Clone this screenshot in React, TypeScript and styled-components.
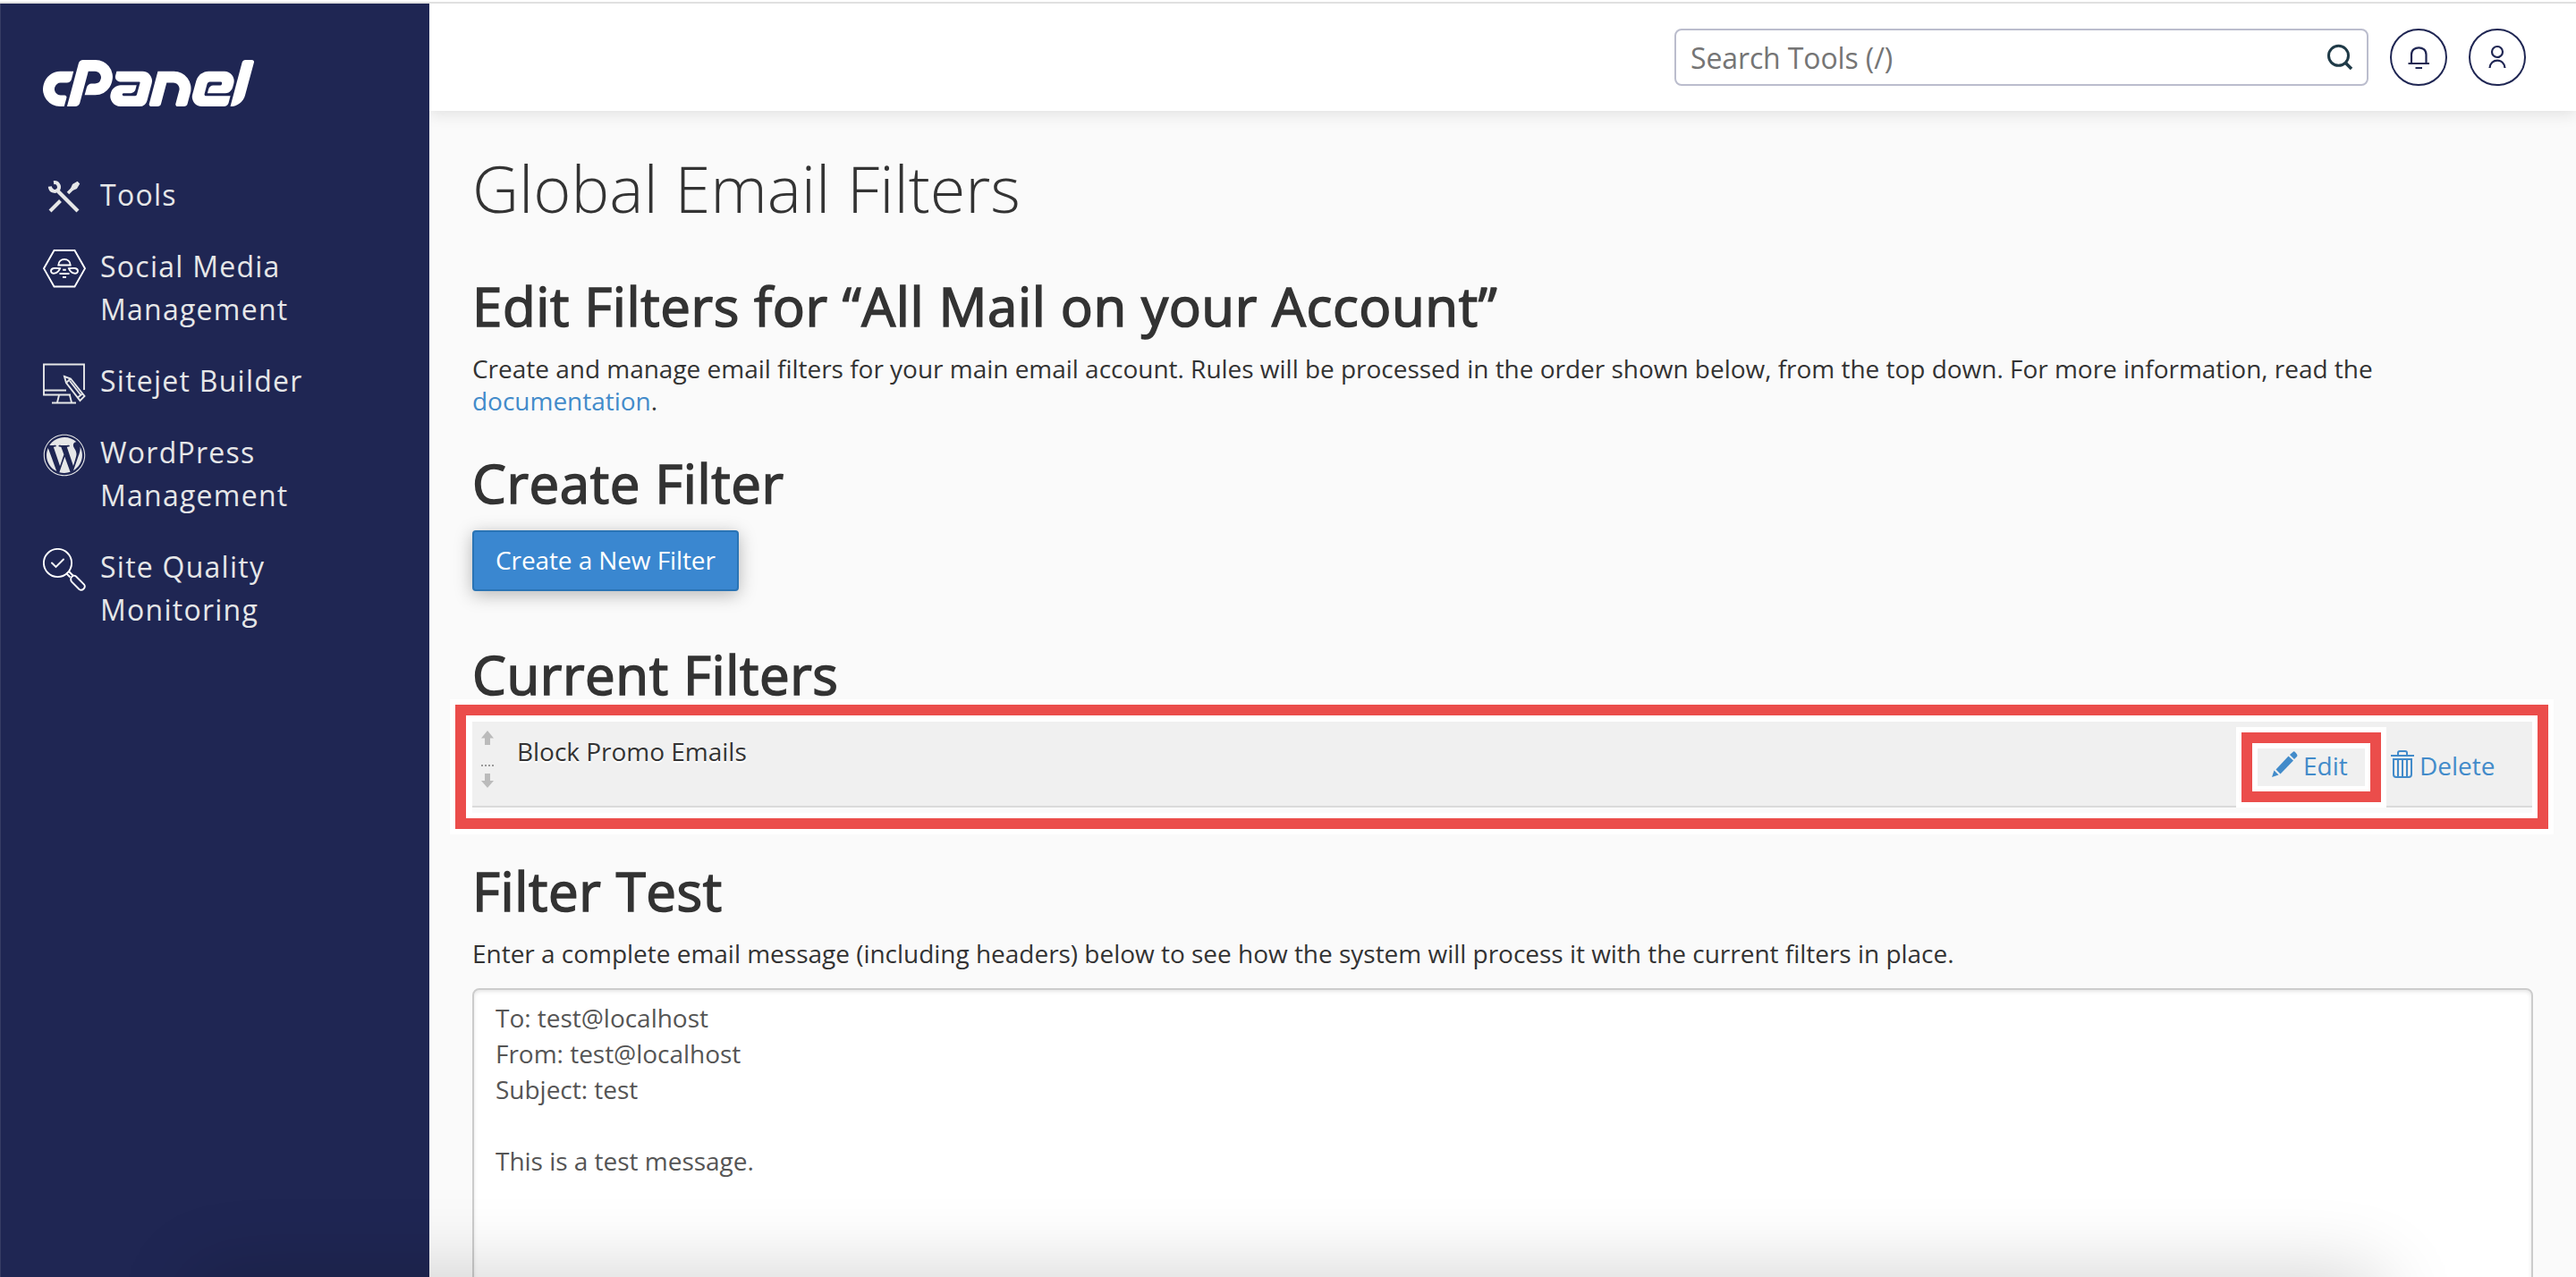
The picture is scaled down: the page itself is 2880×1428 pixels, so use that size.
import styled, { createGlobalStyle } from 'styled-components'
import { SiCpanel } from 'react-icons/si'
import { FaWordpress } from 'react-icons/fa'

const GlobalStyle = createGlobalStyle`
  * {
    box-sizing: border-box;
  }
  body {
    margin: 0;
    overflow: hidden;
    background: #fafafa;
    color: #333;
    font-family: 'Open Sans', sans-serif;
    font-size: 28px;
    line-height: 36px;
    letter-spacing: -0.02px;
  }
`
const Page = styled.div`
  height: 100vh;
  display: flex;
  flex-direction: column;
  overflow: hidden;
  border-top: 2px solid #fff;
`
const Body = styled.div`
  flex: 1;
  min-height: 0;
  display: flex;
  border-top: 2px solid #e0e0e0;
`
const Sidebar = styled.aside`
  width: 480px;
  flex: none;
  background: #1f2653;
  border-left: 1px solid #363c64;
  padding: 64px 0 0 47px;
`
const Logo = styled.div`
  height: 50px;
  display: flex;
  align-items: center;
  color: #fff;
  svg {
    width: 236px;
    height: 236px;
    flex: none;
  }
`
const Nav = styled.nav`
  display: flex;
  flex-direction: column;
  gap: 32px;
  margin-top: 76px;
`
const NavItem = styled.a`
  display: flex;
  align-items: flex-start;
  gap: 16px;
  color: #e6e7e8;
  font-size: 32px;
  line-height: 48px;
  letter-spacing: 1.25px;
  svg {
    flex: none;
    display: block;
    margin: 3px 0 -3px;
  }
`
const NavLabel = styled.span`
  width: 260px;
`
const Main = styled.main`
  flex: 1;
  min-width: 0;
  display: flex;
  flex-direction: column;
`
const Header = styled.header`
  height: 120px;
  flex: none;
  display: flex;
  justify-content: flex-end;
  align-items: flex-start;
  gap: 24px;
  padding: 28px 56px 0 0;
  background: #fff;
  box-shadow: 0 4px 16px rgba(0, 0, 0, 0.1);
  clip-path: inset(0 0 -40px 0);
`
const Search = styled.div`
  width: 776px;
  height: 64px;
  display: flex;
  align-items: center;
  justify-content: space-between;
  padding: 0 14px 0 16px;
  border: 2px solid #bbbdcd;
  border-radius: 8px;
`
const Placeholder = styled.span`
  padding-top: 2px;
  color: #757575;
  font-size: 32px;
  letter-spacing: -0.12px;
`
const RoundButton = styled.button`
  width: 64px;
  height: 64px;
  padding: 0;
  border: 2px solid #1f2653;
  border-radius: 50%;
  background: #fff;
  svg {
    display: block;
    width: 60px;
    height: 60px;
  }
`
const Content = styled.div`
  flex: 1;
  min-height: 0;
  padding: 38px 48px 0;
`
const PageTitle = styled.h1`
  margin: 0 0 48px;
  font-size: 72px;
  line-height: 96px;
  font-weight: 300;
`
const SectionTitle = styled.h2`
  margin: 0 0 16px;
  font-size: 60px;
  line-height: 72px;
  font-weight: 400;
  letter-spacing: 0.6px;
  -webkit-text-stroke: 1.6px #333;
`
const Copy = styled.p`
  margin: 0;
`
const Intro = styled(Copy)`
  margin-bottom: 38px;
`
const Link = styled.a`
  color: #428bca;
`
const CreateButton = styled.button`
  display: block;
  height: 68px;
  margin: 17px 0 57px;
  padding: 0 24px 2px;
  border: 2px solid #2a74b5;
  border-radius: 4px;
  background: #3a87d0;
  color: #fff;
  font: 28px/36px 'Open Sans', sans-serif;
  letter-spacing: -0.1px;
  box-shadow: 0 4px 20px rgba(0, 0, 0, 0.28);
`
const Highlight = styled.div`
  height: 151px;
  margin: -24px -23px 0 -25px;
  border: 6px solid #fff;
`
const RedFrame = styled.div`
  height: 139px;
  border: 12px solid #eb4d4b;
  background: #fff;
  padding: 7px 6px 6px 7px;
`
const FilterList = styled.div`
  height: 102px;
  background: #fafafa;
`
const FilterRow = styled.div`
  height: 96px;
  display: flex;
  align-items: flex-start;
  padding-left: 10px;
  background: #f0f0f0;
  border-bottom: 2px solid #dadada;
  text-shadow: 0 2px 0 #fff;
`
const FilterName = styled.span`
  flex: 1;
  padding: 15px 0 0 26px;
`
const EditFrame = styled.div`
  width: 168px;
  height: 90px;
  margin: 6px 0 -2px;
  border: 6px solid #fff;
  background: #fff;
`
const EditBox = styled.div`
  width: 156px;
  height: 78px;
  border: 12px solid #eb4d4b;
`
const EditInner = styled.div`
  height: 54px;
  border: 6px solid #fff;
  background: #f0f0f0;
  display: flex;
  padding: 0 0 4px 16px;
`
const Action = styled.a`
  display: flex;
  align-items: center;
  color: #428bca;
  text-shadow: none;
  svg {
    display: block;
    margin: -4px 6px 0 0;
  }
`
const DeleteSlot = styled.div`
  width: 163px;
  padding: 31px 0 0 5px;
`
const TestTitle = styled(SectionTitle)`
  margin-top: 27px;
`
const Message = styled.div`
  height: 460px;
  margin-top: 21px;
  padding: 11px 24px;
  border: 2px solid #ccc;
  border-radius: 8px;
  background: #fff;
  box-shadow: inset 0 2px 4px rgba(0, 0, 0, 0.1);
  color: #555;
  line-height: 40px;
  white-space: pre-wrap;
`
// soft shade rising from the bottom edge of the window
const BottomShade = styled.div`
  position: fixed;
  left: 220px;
  right: 220px;
  bottom: -80px;
  height: 80px;
  box-shadow: 0 0 90px rgba(0, 0, 0, 0.2);
  pointer-events: none;
`

const ToolsIcon = () => (
  <svg width="48" height="48" viewBox="0 0 48 48" fill="none" stroke="#e6e7e8">
    <path d="M17 17 39 39" strokeWidth="4.2" />
    <path d="M8 39 19.5 27.5" strokeWidth="4" />
    <path d="M28 19 33 14" strokeWidth="3.6" />
    <path d="M31.5 14 33.5 9.5 38.5 6.5 40.5 8.5 37.5 13.5 33 15.5Z" fill="#e6e7e8" strokeWidth="1.2" />
    <path d="M12 7.2C16.5 6.5 19.5 10.8 17.2 15C14.5 18.5 8.2 17 7.8 11.5" strokeWidth="4" />
  </svg>
)

const SocialIcon = () => (
  <svg width="48" height="48" viewBox="0 0 48 48" fill="none" stroke="#fff" strokeWidth="1.9">
    <path d="M12.5 3H35.5L47 23.2 35.5 43.5H12.5L1 23.2Z" />
    <path d="M17.3 19.5C17.3 10.8 30.7 10.8 30.7 19.5Z" />
    <path d="M19 23.3C14 22.5 9 22.5 9 26C9 30 16 30 19 23.3Z" />
    <path d="M29 23.3C34 22.5 39 22.5 39 26C39 30 32 30 29 23.3Z" />
    <path d="M22.2 24.8H25.8M18.5 29H29.5M22 33H26" />
  </svg>
)

const SitejetIcon = () => (
  <svg width="48" height="48" viewBox="0 0 48 48" fill="none" stroke="#e6e7e8" strokeWidth="1.9">
    <path d="M46 31V2.5H1V36.5H31M1 31.5H26" />
    <path d="M18 37 16 45M30 37 32 45M10 45.5H37" />
    <path d="M24 16 31 18.5 46.5 38 41.5 43 26 23Z" />
    <path d="M26.5 22.5 31 18.5M39 39.5 44 35.5M30 21 42.5 37" />
  </svg>
)

const QualityIcon = () => (
  <svg width="48" height="48" viewBox="0 0 48 48" fill="none" stroke="#fff" strokeWidth="1.9">
    <circle cx="16.5" cy="16.5" r="15.6" />
    <path d="M10 16.5 14.5 21 23 12.5" strokeLinecap="round" />
    <path d="M26 28 30.5 32.5M28.5 25.5 33.5 30.5" />
    <path d="M31.5 33C33 30.5 35 30 37 31.5L46 40.5C48.5 44 44 48.5 40.5 46L32 37.5C31 36 31 34.5 31.5 33Z" />
  </svg>
)

const SearchIcon = () => (
  <svg width="32" height="32" viewBox="0 0 32 32" fill="none" stroke="#1f3a47" strokeWidth="3">
    <circle cx="14.5" cy="14.3" r="11" />
    <path d="M22 22 29 29" strokeWidth="3.6" />
  </svg>
)

const BellIcon = () => (
  <svg viewBox="0 0 60 60" fill="none" stroke="#1f2653" strokeWidth="2.2">
    <path d="M22 37V27C22 16.7 38.5 16.7 38.5 27V37" />
    <path d="M18.5 37H42M26.5 42H34" />
  </svg>
)

const UserIcon = () => (
  <svg viewBox="0 0 60 60" fill="none" stroke="#1f2653" strokeWidth="2.2">
    <circle cx="30" cy="24" r="6" />
    <path d="M21.5 42C22 30.8 38 30.8 38.5 42" />
  </svg>
)

const DragIcon = () => (
  <svg width="14" height="74" viewBox="0 0 14 74" fill="#bbb">
    <path d="M7 10 14 18.5H10V26H4V18.5H0Z" />
    <path d="M0 49H2M4 49H6M8 49H10M12 49H14" stroke="#999" strokeWidth="2" />
    <path d="M7 74 0 66H4V58H10V66H14Z" />
  </svg>
)

const PencilIcon = () => (
  <svg width="29" height="29" viewBox="0 0 29 29" fill="#428bca">
    <path d="M0 29 2.5 21.5 7.5 26.5Z" />
    <path d="M4.5 20.5 18.5 5.5 24 10.5 9.5 25.5Z" />
    <path d="M20 4 24 .5Q25 0 26 1L28 3.5Q29 5 28 6L25 9Z" />
  </svg>
)

const TrashIcon = () => (
  <svg width="26" height="31" viewBox="0 0 26 31" fill="none" stroke="#428bca" strokeWidth="2">
    <path d="M0 6H26M8 6V3Q8 1 10 1H16Q18 1 18 3V6" />
    <path d="M3 10H23V27Q23 30 20 30H6Q3 30 3 27Z" />
    <path d="M8 10V29M13 10V29M18 10V29" />
  </svg>
)

const navItems = [
  { label: 'Tools', icon: <ToolsIcon /> },
  { label: 'Social Media Management', icon: <SocialIcon /> },
  { label: 'Sitejet Builder', icon: <SitejetIcon /> },
  { label: 'WordPress Management', icon: <FaWordpress size={48} /> },
  { label: 'Site Quality Monitoring', icon: <QualityIcon /> },
]

const message = `To: test@localhost
From: test@localhost
Subject: test

This is a test message.`

const App = () => (
  <Page>
    <GlobalStyle />
    <Body>
      <Sidebar>
        <Logo>
          <SiCpanel />
        </Logo>
        <Nav>
          {navItems.map(({ label, icon }) => (
            <NavItem key={label}>
              {icon}
              <NavLabel>{label}</NavLabel>
            </NavItem>
          ))}
        </Nav>
      </Sidebar>
      <Main>
        <Header>
          <Search>
            <Placeholder>Search Tools (/)</Placeholder>
            <SearchIcon />
          </Search>
          <RoundButton>
            <BellIcon />
          </RoundButton>
          <RoundButton>
            <UserIcon />
          </RoundButton>
        </Header>
        <Content>
          <PageTitle>Global Email Filters</PageTitle>
          <SectionTitle>Edit Filters for “All Mail on your Account”</SectionTitle>
          <Intro>
            Create and manage email filters for your main email account. Rules will be processed in
            the order shown below, from the top down. For more information, read the{' '}
            <Link>documentation</Link>.
          </Intro>
          <SectionTitle>Create Filter</SectionTitle>
          <CreateButton>Create a New Filter</CreateButton>
          <SectionTitle>Current Filters</SectionTitle>
          <Highlight>
            <RedFrame>
              <FilterList>
                <FilterRow>
                  <DragIcon />
                  <FilterName>Block Promo Emails</FilterName>
                  <EditFrame>
                    <EditBox>
                      <EditInner>
                        <Action>
                          <PencilIcon />
                          Edit
                        </Action>
                      </EditInner>
                    </EditBox>
                  </EditFrame>
                  <DeleteSlot>
                    <Action>
                      <TrashIcon />
                      Delete
                    </Action>
                  </DeleteSlot>
                </FilterRow>
              </FilterList>
            </RedFrame>
          </Highlight>
          <TestTitle>Filter Test</TestTitle>
          <Copy>
            Enter a complete email message (including headers) below to see how the system will
            process it with the current filters in place.
          </Copy>
          <Message>{message}</Message>
        </Content>
      </Main>
    </Body>
    <BottomShade />
  </Page>
)

export default App
